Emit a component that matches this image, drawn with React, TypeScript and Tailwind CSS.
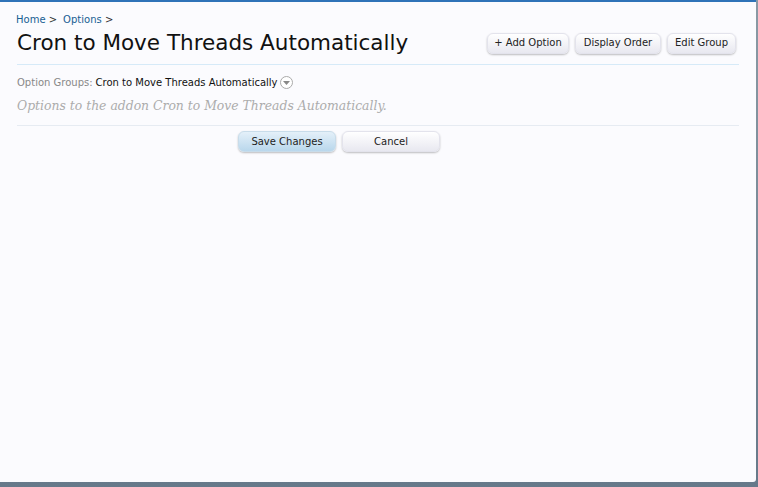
import React from "react";

const sans = "font-['DejaVu_Sans',Verdana,sans-serif]";

function TopButton({ label, width }: { label: string; width: string }) {
  return (
    <button
      type="button"
      className={`h-[21px] ${width} rounded-[6px] border border-[#e3e3ec] bg-gradient-to-b from-[#ffffff] to-[#e8e8f0] text-[10px] leading-none text-[#222] shadow-[0_1px_2px_rgba(0,0,0,0.25)] ${sans}`}
    >
      {label}
    </button>
  );
}

export default function App() {
  return (
    <div className="h-[487px] w-[758px] overflow-hidden bg-gradient-to-b from-[#8a9aa5] to-[#66798a]">
      <div className="flex h-[482px] w-[756px] flex-col rounded-br-[3px] border-t-2 border-[#2f73b8] bg-[#fbfbfe] px-[17px] pt-[10px]">
        <div className={`-ml-px flex h-[15px] items-center gap-[6px] text-[10px] leading-[15px] text-[#176093] ${sans}`}>
          <span>
            Home <span className="text-[#333]">&gt;</span>
          </span>
          <span>
            Options <span className="text-[#333]">&gt;</span>
          </span>
        </div>

        <div className="mt-[2px] flex h-[28px] items-center justify-between pr-[3px]">
          <h1 className={`text-[21.5px] leading-[28px] text-[#111] ${sans}`}>
            Cron to Move Threads Automatically
          </h1>
          <div className="flex gap-[6px]">
            <TopButton label="+ Add Option" width="w-[82px]" />
            <TopButton label="Display Order" width="w-[86px]" />
            <TopButton label="Edit Group" width="w-[69px]" />
          </div>
        </div>

        <div className="mt-[7px] h-px bg-[#d6eaf8]" />

        <div className={`mt-[10px] flex h-[15px] items-center text-[10px] ${sans}`}>
          <span className="text-[#888]">Option Groups:</span>
          <span className="ml-[3px] text-[#111]">Cron to Move Threads Automatically</span>
          <span className="ml-[2px] flex h-[13px] w-[13px] items-center justify-center rounded-full border border-[#aaa] bg-white">
            <svg width="7" height="4" viewBox="0 0 7 4">
              <path d="M0 0h7L3.5 4z" fill="#888" />
            </svg>
          </span>
        </div>

        <p className="mt-[7px] h-[18px] font-['DejaVu_Serif',Georgia,serif] text-[12.4px] leading-[18px] italic text-[#acacac]">
          Options to the addon Cron to Move Threads Automatically.
        </p>

        <div className="mt-[10px] h-px bg-[#e6ebf2]" />

        <div className="mt-[5px] flex justify-center gap-[6px] pr-[78px]">
          <button
            type="button"
            className={`h-[21px] w-[98px] rounded-[6px] border border-[#c8dcea] bg-gradient-to-b from-[#e4f0f9] to-[#b9d7ec] text-[10px] text-[#222] shadow-[0_1px_2px_rgba(0,0,0,0.25)] ${sans}`}
          >
            Save Changes
          </button>
          <button
            type="button"
            className={`h-[21px] w-[98px] rounded-[6px] border border-[#e3e3ec] bg-gradient-to-b from-[#ffffff] to-[#e8e8f0] text-[10px] text-[#222] shadow-[0_1px_2px_rgba(0,0,0,0.25)] ${sans}`}
          >
            Cancel
          </button>
        </div>
      </div>
    </div>
  );
}
